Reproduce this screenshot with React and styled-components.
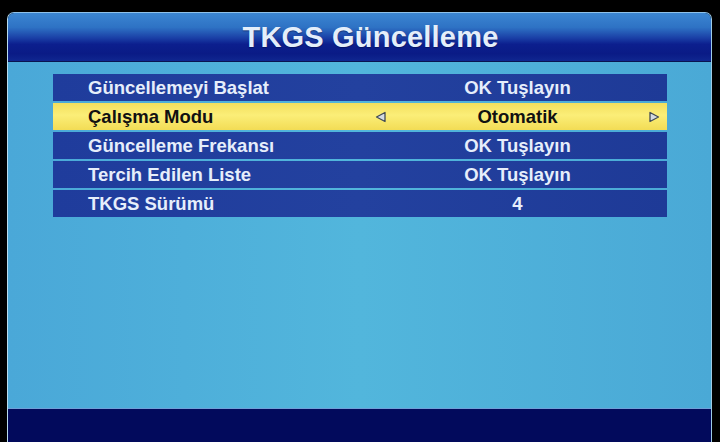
import React from 'react';
import styled, { createGlobalStyle } from 'styled-components';

const GlobalStyle = createGlobalStyle`
    html, body {
        margin: 0;
        padding: 0;
        background: #000;
        width: 720px;
        height: 442px;
        overflow: hidden;
    }
    body {
        font-family: "Liberation Sans", Arial, sans-serif;
    }
`;

const ROWS = [
    { label: 'Güncellemeyi Başlat', value: 'OK Tuşlayın' },
    { label: 'Çalışma Modu', value: 'Otomatik', selected: true },
    { label: 'Güncelleme Frekansı', value: 'OK Tuşlayın' },
    { label: 'Tercih Edilen Liste', value: 'OK Tuşlayın' },
    { label: 'TKGS Sürümü', value: '4' },
];

const Screen = styled.div`
    width: 720px;
    height: 442px;
    padding: 12px 8px 0 7px;
    box-sizing: border-box;
`;

const Panel = styled.div`
    display: flex;
    flex-direction: column;
    height: 430px;
    border-radius: 7px 7px 0 0;
    overflow: hidden;
    border-left: 1px solid #b9dcef;
    border-right: 1px solid #9fcbe6;
    border-top: 1px solid #8fc2ea;
`;

const Header = styled.div`
    height: 48px;
    display: flex;
    align-items: center;
    justify-content: center;
    padding-left: 22px;
    background: linear-gradient(
        to bottom,
        #3b86d2 0%,
        #2e72c4 30%,
        #1a3fa6 52%,
        #0c1f8e 65%,
        #0a1b86 85%,
        #0f2790 100%
    );
    border-bottom: 1px solid #0a1450;
`;

const Title = styled.h1`
    margin: 0;
    font-size: 29px;
    font-weight: bold;
    color: #e4eefa;
    letter-spacing: 0.2px;
    text-shadow: 0 1px 1px rgba(0, 10, 60, 0.5);
`;

const Body = styled.div`
    flex: 1;
    background: linear-gradient(to right, #4aa8d8 0%, #52b6dc 50%, #4aa9d6 100%);
    padding: 12px 0 0 45px;
`;

const Table = styled.div`
    width: 614px;
    display: flex;
    flex-direction: column;
    gap: 2px;
`;

const Row = styled.div`
    height: 27px;
    display: grid;
    grid-template-columns: 317px 1fr;
    align-items: center;
    font-size: 18.5px;
    font-weight: bold;
    color: ${(p) => (p.$selected ? '#111' : '#e6eefb')};
    background: ${(p) =>
        p.$selected
            ? 'linear-gradient(to bottom, #f3df5c 0%, #fbee78 45%, #f2dc55 100%)'
            : 'linear-gradient(to right, #1f3c9c 0%, #23419f 50%, #1e3a97 100%)'};
`;

const Label = styled.div`
    padding-left: 35px;
`;

const Value = styled.div`
    position: relative;
    text-align: center;
    padding-right: 2px;
`;

const Arrow = styled.svg`
    position: absolute;
    top: 50%;
    margin-top: -6px;
    width: 11px;
    height: 12px;
    ${(p) => (p.$side === 'left' ? 'left: 5px;' : 'right: 7px;')}
`;

function ArrowIcon({ side }) {
    const d = side === 'left' ? 'M10 1.5 L1.5 6 L10 10.5 Z' : 'M1 1.5 L9.5 6 L1 10.5 Z';
    return (
        <Arrow $side={side} viewBox="0 0 11 12">
            <path d={d} fill="#d4dbe2" stroke="#404a55" strokeWidth="1.3" strokeLinejoin="round" />
        </Arrow>
    );
}

const Footer = styled.div`
    height: 34px;
    background: #020a5c;
    border-top: 1px solid #6f9fd8;
`;

export default function App() {
    return (
        <>
            <GlobalStyle />
            <Screen>
                <Panel>
                    <Header>
                        <Title>TKGS Güncelleme</Title>
                    </Header>
                    <Body>
                        <Table>
                            {ROWS.map((row) => (
                                <Row key={row.label} $selected={row.selected}>
                                    <Label>{row.label}</Label>
                                    <Value>
                                        {row.selected && <ArrowIcon side="left" />}
                                        {row.value}
                                        {row.selected && <ArrowIcon side="right" />}
                                    </Value>
                                </Row>
                            ))}
                        </Table>
                    </Body>
                    <Footer />
                </Panel>
            </Screen>
        </>
    );
}
